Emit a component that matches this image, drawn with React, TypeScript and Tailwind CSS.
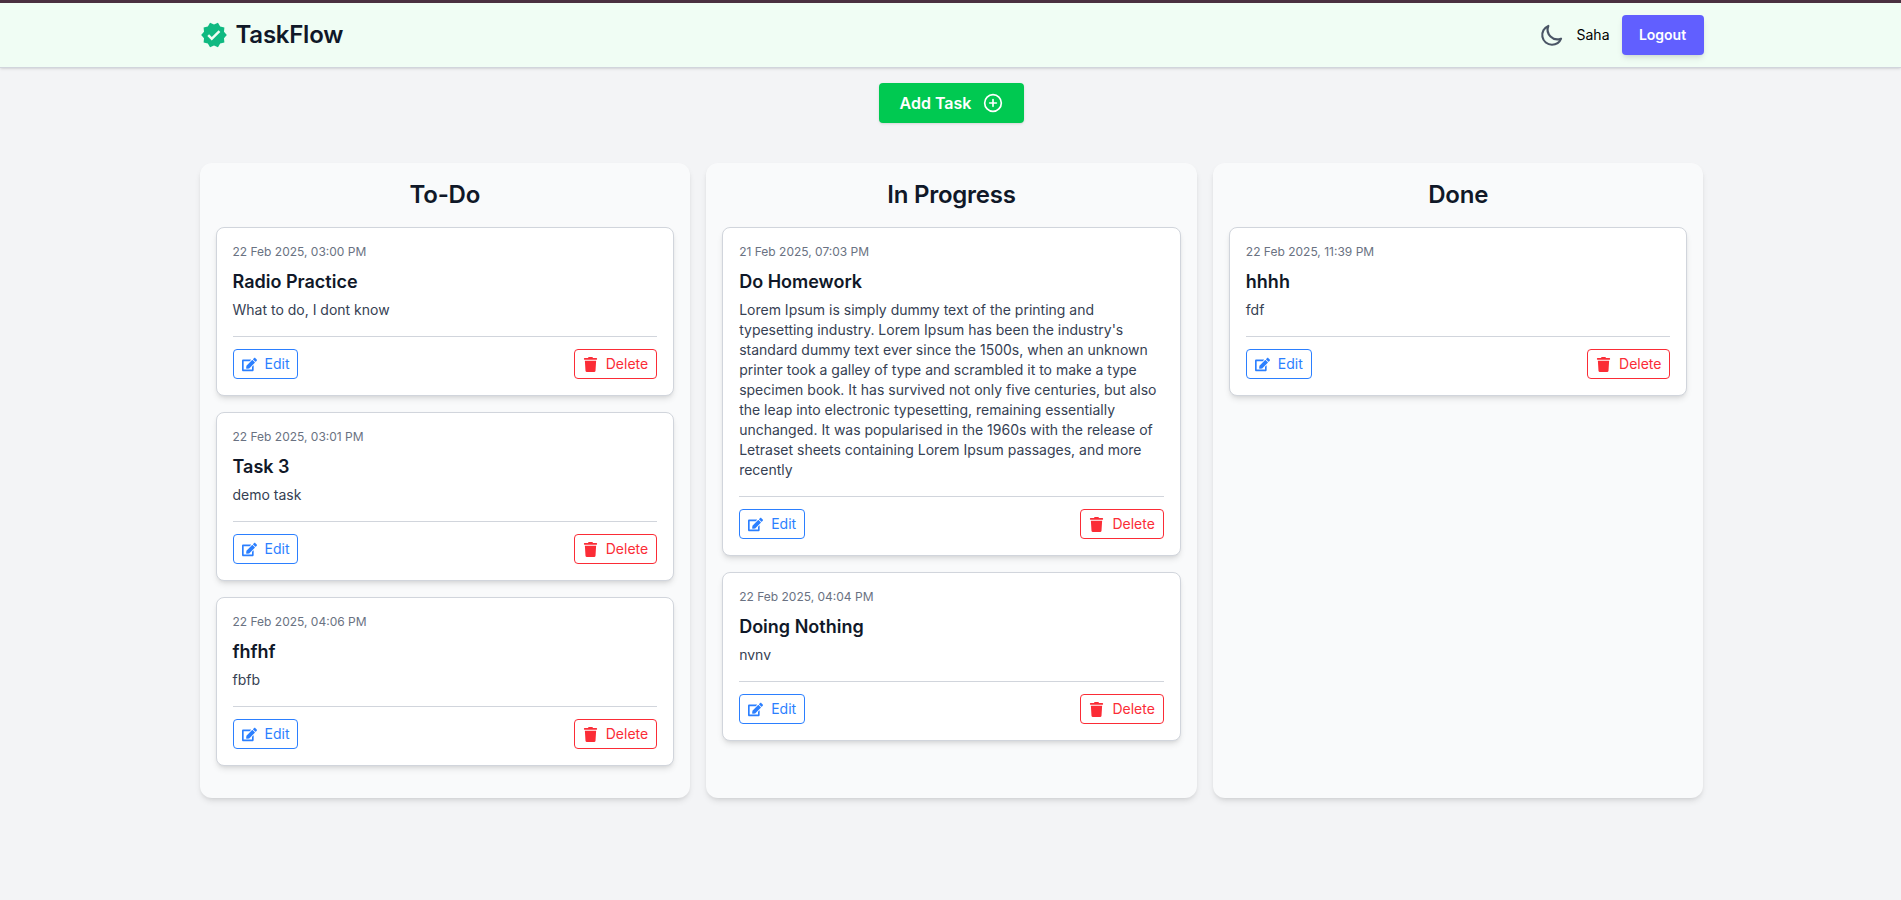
import { FaEdit, FaTrash } from "react-icons/fa";
import { FiPlusCircle } from "react-icons/fi";
import { HiOutlineMoon } from "react-icons/hi";
import { MdVerified } from "react-icons/md";

type Task = { id: number; date: string; title: string; body: string };

const COLUMNS: { name: string; tasks: Task[] }[] = [
  {
    name: "To-Do",
    tasks: [
      { id: 1, date: "22 Feb 2025, 03:00 PM", title: "Radio Practice", body: "What to do, I dont know" },
      { id: 2, date: "22 Feb 2025, 03:01 PM", title: "Task 3", body: "demo task" },
      { id: 3, date: "22 Feb 2025, 04:06 PM", title: "fhfhf", body: "fbfb" },
    ],
  },
  {
    name: "In Progress",
    tasks: [
      {
        id: 4,
        date: "21 Feb 2025, 07:03 PM",
        title: "Do Homework",
        body: "Lorem Ipsum is simply dummy text of the printing and typesetting industry. Lorem Ipsum has been the industry's standard dummy text ever since the 1500s, when an unknown printer took a galley of type and scrambled it to make a type specimen book. It has survived not only five centuries, but also the leap into electronic typesetting, remaining essentially unchanged. It was popularised in the 1960s with the release of Letraset sheets containing Lorem Ipsum passages, and more recently",
      },
      { id: 5, date: "22 Feb 2025, 04:04 PM", title: "Doing Nothing", body: "nvnv" },
    ],
  },
  {
    name: "Done",
    tasks: [{ id: 6, date: "22 Feb 2025, 11:39 PM", title: "hhhh", body: "fdf" }],
  },
];

function TaskCard({ task }: { task: Task }) {
  return (
    <div className="rounded-lg border border-gray-300 bg-white p-4 shadow-md">
      <p className="text-xs leading-4 text-gray-500">{task.date}</p>
      <h3 className="mt-2 text-lg font-semibold leading-7 text-gray-900">{task.title}</h3>
      <p className="mt-1 text-sm leading-5 text-gray-700">{task.body}</p>
      <div className="mt-4 flex items-center justify-between border-t border-gray-300 pt-3">
        <button className="flex h-[30px] items-center gap-2 rounded border border-blue-500 px-2 text-sm text-blue-500">
          <FaEdit size={15} />
          Edit
        </button>
        <button className="flex h-[30px] items-center gap-2 rounded border border-red-500 px-2 text-sm text-red-500">
          <FaTrash size={15} />
          Delete
        </button>
      </div>
    </div>
  );
}

export default function App() {
  return (
    <div className="min-h-[900px] bg-gray-100 font-['Inter',sans-serif]">
      <header className="h-[68px] border-t-[3px] border-b border-t-[#4a3040] border-b-gray-300 bg-green-50 shadow-sm">
        <div className="ml-[199.5px] flex h-full w-[1504px] items-center justify-between">
          <div className="flex items-center gap-2">
            <MdVerified size={28} className="text-[#10b981]" />
            <span className="text-2xl font-semibold tracking-[-0.01em] text-gray-900">TaskFlow</span>
          </div>
          <div className="flex items-center gap-3">
            <HiOutlineMoon size={26} className="text-gray-600" />
            <span className="text-sm text-black">Saha</span>
            <button className="h-10 w-[82px] rounded bg-indigo-500 text-sm font-semibold text-white shadow-md">
              Logout
            </button>
          </div>
        </div>
      </header>

      <div className="ml-[199.5px] mt-[15px] flex w-[1504px] justify-center">
        <button className="flex h-10 items-center gap-3 rounded bg-green-500 px-[21px] font-semibold text-white shadow-sm">
          Add Task
          <FiPlusCircle size={20} />
        </button>
      </div>

      <main className="ml-[199.5px] mt-10 grid h-[635px] w-[1504px] grid-cols-3 gap-4">
        {COLUMNS.map((col) => (
          <section key={col.name} className="rounded-xl bg-gray-50 p-4 shadow-md">
            <h2 className="mb-4 text-center text-2xl font-semibold leading-8 tracking-[-0.01em] text-gray-900">
              {col.name}
            </h2>
            <div className="flex flex-col gap-4">
              {col.tasks.map((t) => (
                <TaskCard key={t.id} task={t} />
              ))}
            </div>
          </section>
        ))}
      </main>
    </div>
  );
}
